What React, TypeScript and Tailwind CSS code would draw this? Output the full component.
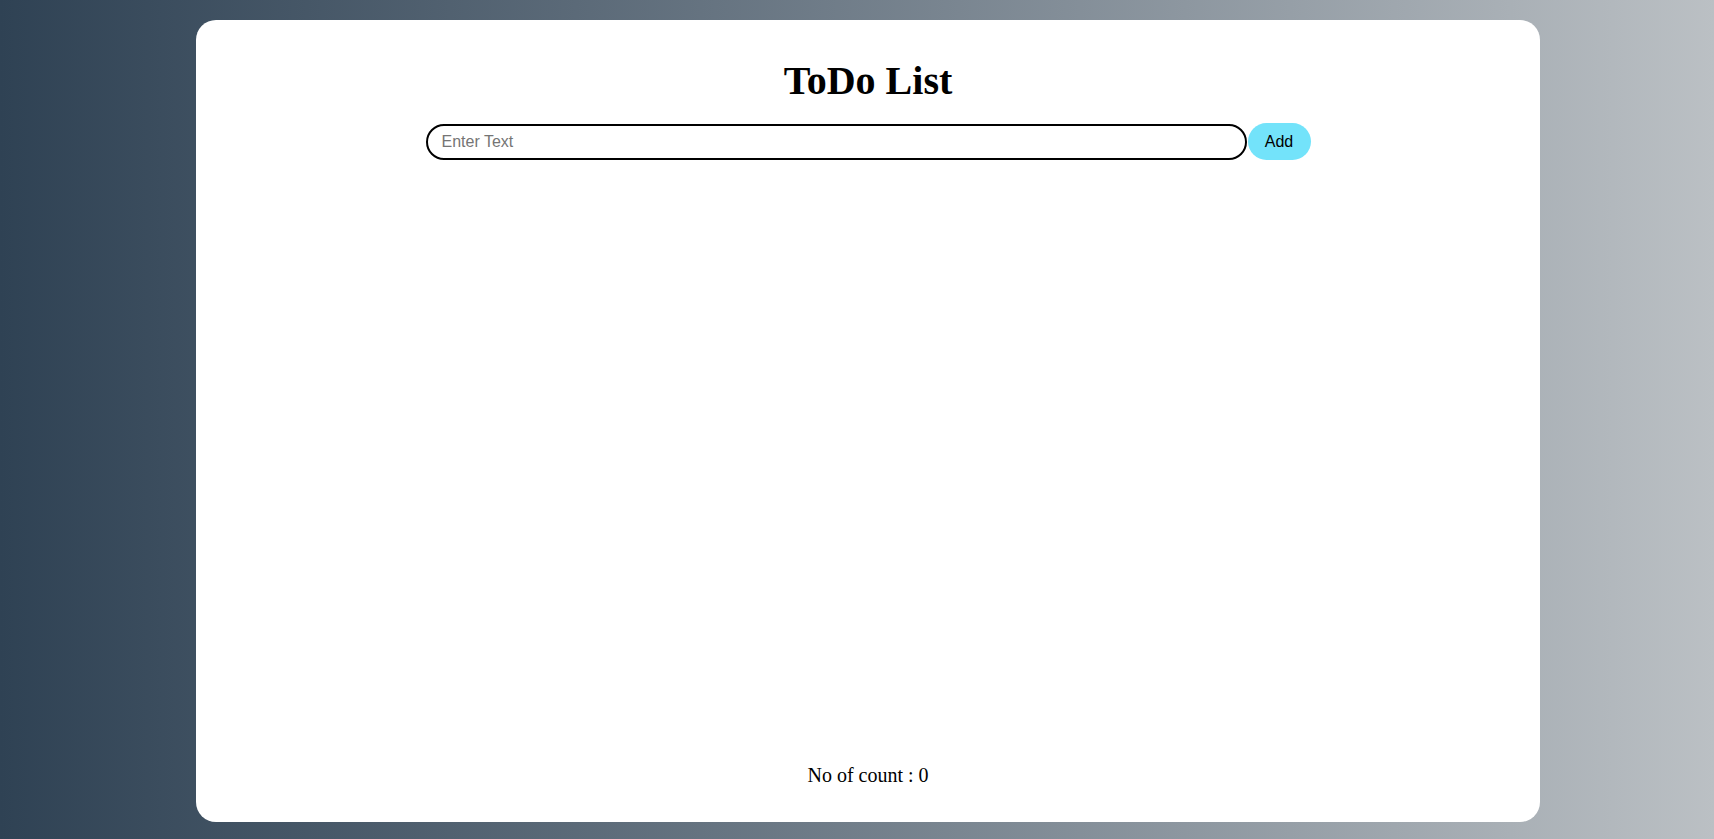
import React, { useState } from "react";

export default function App() {
  const [text, setText] = useState("");
  const [items, setItems] = useState<string[]>([]);
  return (
    <div className="h-[839px] w-full overflow-hidden bg-linear-to-r from-[#2f4254] to-[#bbc0c4] pt-[20px]">
      <div className="ml-[196px] flex h-[802px] w-[1344px] flex-col items-center rounded-[20px] bg-white pt-[38px] pb-[32px]">
        <h1 className="font-['Liberation_Serif',serif] text-[40px] font-bold leading-[46px] text-black">
          ToDo List
        </h1>
        <div className="mt-[19px] flex items-center">
          <input
            value={text}
            onChange={(e) => setText(e.target.value)}
            placeholder="Enter Text"
            className="h-[36px] w-[821px] rounded-full border-2 border-black bg-white pl-[14px] font-['Liberation_Sans',sans-serif] text-[16px] text-black placeholder:text-[#757575] outline-none"
          />
          <button
            onClick={() => {
              if (text.trim()) {
                setItems([...items, text]);
                setText("");
              }
            }}
            className="ml-px h-[37px] w-[63px] rounded-full bg-[#73e3fa] font-['Liberation_Sans',sans-serif] text-[16px] text-black"
          >
            Add
          </button>
        </div>
        <ul className="flex-1">
          {items.map((it, i) => (
            <li key={i} className="font-['Liberation_Serif',serif] text-[20px]">
              {it}
            </li>
          ))}
        </ul>
        <div className="font-['Liberation_Serif',serif] text-[20px] text-black">
          No of count : {items.length}
        </div>
      </div>
    </div>
  );
}
